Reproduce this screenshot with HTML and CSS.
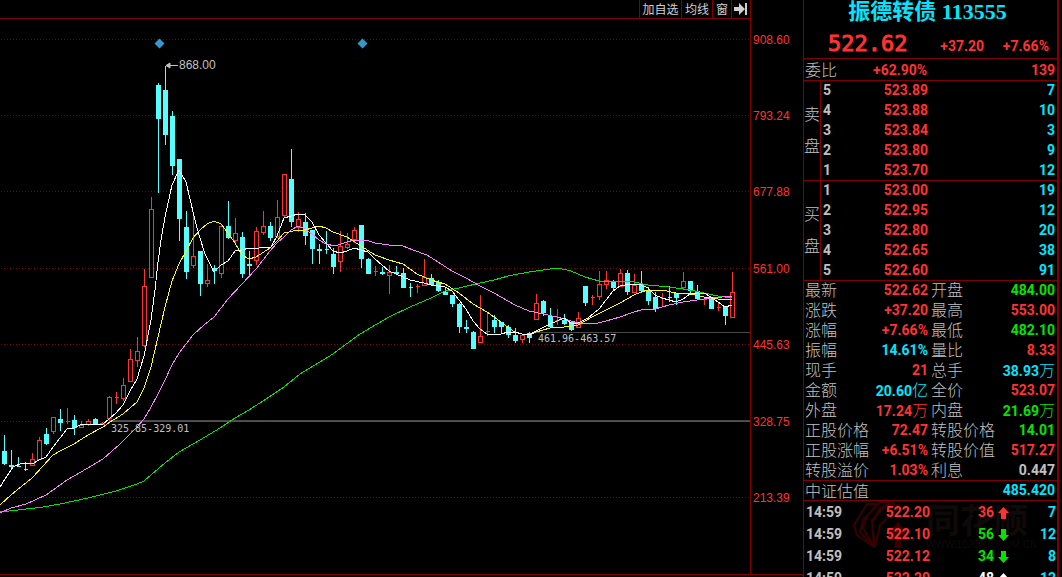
FILE: index.html
```html
<!DOCTYPE html>
<html lang="zh-CN">
<head>
<meta charset="utf-8">
<title>振德转债 113555</title>
<link rel="stylesheet" href="styles.css">
</head>
<body>
<main class="chart">
  <nav class="toolbar">
    <button type="button" class="tool tool-add">加自选</button>
    <button type="button" class="tool tool-ma">均线</button>
    <button type="button" class="tool tool-win">窗</button>
    <button type="button" class="tool tool-win" aria-label="收起">
      <svg width="14" height="12" viewBox="0 0 14 12"><path d="M0 4h5V0l6 6-6 6V8H0zM11 0h2v12h-2z" fill="#d0d0d0"/></svg>
    </button>
  </nav>
  <svg class="plot" viewBox="0 19 803 556" role="img" aria-label="K线图">
    <path class="grid" d="M1 39.5H750M1 115.5H750M1 191.5H750M1 268.5H750M1 344.5H750M1 421.5H750M1 497.5H750"/>
    <path class="gap" d="M109 420.5H750M533 332.5H750"/>
    <path class="gap-strong" d="M109 421.5H750"/>
    <path class="frame" d="M750.5 19V575M0 574.5H803"/>
    <g id="candles"></g>
    <polyline class="ma ma60" points="0,512 18,510 43,507 60,504 88,498 116,491 137,484 144,481 151,475 165,463 179,452 200,440 220,428 235,418 249,410 263,401 284,387 300,374 330,356 360,334 389,317 410,307 431,298 445,291 459,288 480,283 494,280 508,276 529,272 543,270 558,268 571,271 585,277 599,281 620,281 634,282 648,285 669,287 690,290 704,293 718,296 732,298"/>
    <polyline class="ma ma20" points="0,513 11,508 26,504 46,495 67,480 81,472 103,459 120,444 137,427 144,419 151,407 158,394 165,380 172,365 179,353 186,344 193,335 204,325 214,317 228,299 242,284 256,269 270,251 277,243 284,237 291,230 298,226 305,229 312,234 319,240 326,244 335,246 347,242 354,240 366,240 375,243 389,245 403,246 413,250 427,255 438,262 452,271 466,278 480,286 494,293 508,301 515,305 529,311 543,314 557,317 571,321 578,323 598,323 606,321 620,317 634,312 641,310 655,309 669,305 683,302 697,300 711,298 722,297 732,296"/>
    <polyline class="ma ma10" points="0,505 11,495 22,486 32,478 43,466 53,455 60,451 74,444 88,435 103,427 110,422 123,414 137,402 144,388 151,367 158,337 165,307 172,281 179,264 186,251 193,238 200,230 207,224 214,221 221,224 228,233 235,243 242,255 249,259 256,257 270,248 277,241 284,233 298,230 305,230 312,228 319,226 326,228 333,232 347,237 361,246 375,255 389,260 403,264 417,274 431,280 445,284 459,293 473,304 487,312 501,322 510,329 515,332 522,334 529,335 536,332 550,328 564,327 578,325 592,317 606,310 620,303 634,295 641,292 648,290 662,290 676,293 690,294 704,297 711,298 725,300 732,299"/>
    <polyline class="ma ma5" points="0,487 5,479 13,467 22,463 32,464 39,460 46,457 53,447 60,438 67,429 74,428 82,424 103,424 109,419 116,413 123,405 130,391 137,379 144,356 151,320 155,290 158,262 161,240 165,217 172,185 179,170 186,182 195,220 199,235 205,254 212,268 214,272 221,265 228,261 235,251 242,250 249,248 255,249 263,247 271,247 277,236 284,218 291,216 298,214 305,215 312,222 319,235 326,243 333,251 340,253 347,251 354,248 361,250 368,252 375,259 382,265 389,271 396,274 410,280 424,283 431,285 438,286 445,287 452,291 459,300 466,309 473,321 480,329 487,334 501,334 508,332 515,332 522,334 529,335 536,331 550,324 557,321 564,318 571,323 578,323 588,318 599,309 606,300 613,291 620,286 630,284 641,285 648,288 655,295 662,298 669,300 676,302 683,299 690,294 704,293 711,297 718,302 725,307 732,305"/>
    <path class="event" d="M159.500 38.500l5 5-5 5-5-5zM362.500 38.500l5 5-5 5-5-5z"/>
    <path class="pointer" d="M166 65.500H178M170 63l-4 2.500 4 2.500z"/>
    <text class="peak" x="179" y="69">868.00</text>
    <text class="range" x="111" y="432">325.85-329.01</text>
    <text class="range" x="538" y="342">461.96-463.57</text>
    <g class="axis">
      <text x="753" y="44">908.60</text>
      <text x="753" y="120">793.24</text>
      <text x="753" y="196">677.88</text>
      <text x="753" y="273">561.00</text>
      <text x="753" y="349">445.63</text>
      <text x="753" y="426">328.75</text>
      <text x="753" y="502">213.39</text>
    </g>
  </svg>
</main>

<aside class="panel">
  <header class="head">
    <h1 class="name">振德转债 113555</h1>
    <div class="quote"><span class="last">522.62</span><span>+37.20</span><span>+7.66%</span></div>
  </header>
  <div class="line ratio"><span class="label">委比</span><span class="ratio-pct red">+62.90%</span><span class="red">139</span></div>

  <table class="book">
    <tbody>
      <tr><th class="side" rowspan="5"><span>卖</span><span>盘</span></th><td class="lvl">5</td><td class="px">523.89</td><td class="vol">7</td></tr>
      <tr><td class="lvl">4</td><td class="px">523.88</td><td class="vol">10</td></tr>
      <tr><td class="lvl">3</td><td class="px">523.84</td><td class="vol">3</td></tr>
      <tr><td class="lvl">2</td><td class="px">523.80</td><td class="vol">9</td></tr>
      <tr class="end"><td class="lvl">1</td><td class="px">523.70</td><td class="vol">12</td></tr>
    </tbody>
    <tbody>
      <tr><th class="side" rowspan="5"><span>买</span><span>盘</span></th><td class="lvl">1</td><td class="px">523.00</td><td class="vol">19</td></tr>
      <tr><td class="lvl">2</td><td class="px">522.95</td><td class="vol">12</td></tr>
      <tr><td class="lvl">3</td><td class="px">522.80</td><td class="vol">20</td></tr>
      <tr><td class="lvl">4</td><td class="px">522.65</td><td class="vol">38</td></tr>
      <tr class="end"><td class="lvl">5</td><td class="px">522.60</td><td class="vol">91</td></tr>
    </tbody>
  </table>

  <table class="stats">
    <colgroup><col class="c1"><col class="c2"><col class="c3"><col></colgroup>
    <tbody>
      <tr><th>最新</th><td class="red">522.62</td><th>开盘</th><td class="green">484.00</td></tr>
      <tr><th>涨跌</th><td class="red">+37.20</td><th>最高</th><td class="red">553.00</td></tr>
      <tr><th>涨幅</th><td class="red">+7.66%</td><th>最低</th><td class="green">482.10</td></tr>
      <tr><th>振幅</th><td class="cyan">14.61%</td><th>量比</th><td class="red">8.33</td></tr>
      <tr><th>现手</th><td class="red">21</td><th>总手</th><td class="cyan">38.93<i>万</i></td></tr>
      <tr><th>金额</th><td class="cyan">20.60<i>亿</i></td><th>全价</th><td class="red">523.07</td></tr>
      <tr><th>外盘</th><td class="red">17.24<i>万</i></td><th>内盘</th><td class="green">21.69<i>万</i></td></tr>
      <tr><th>正股价格</th><td class="red">72.47</td><th>转股价格</th><td class="green">14.01</td></tr>
      <tr><th>正股涨幅</th><td class="red">+6.51%</td><th>转股价值</th><td class="red">517.27</td></tr>
      <tr class="end"><th>转股溢价</th><td class="red">1.03%</td><th>利息</th><td class="grey">0.447</td></tr>
    </tbody>
  </table>
  <div class="line valuation"><span class="label">中证估值</span><span class="cyan">485.420</span></div>

  <section class="ticks">
    <svg class="mark" width="184" height="56" viewBox="0 0 184 56" aria-hidden="true">
      <g fill="none" stroke="#380000" stroke-width="2">
        <path d="M15 3h11L11 19 8 31l14 15L5 34 2 24zM28 1h9L20 19l2 27-11-19 4-12zM40 2l7 3-19 19-5 22-3-24 8-15z"/>
      </g>
      <path d="M46 20c3 7 10 9 10 15 0 5-6 6-8 3l2 9h-8l2-9c-2 3-8 2-8-3 0-6 7-8 10-15z" fill="#380000"/>
      <text class="mark-name" x="74" y="32">同花顺</text>
      <text class="mark-url" x="74" y="47">WWW.10JQKA.COM.CN</text>
    </svg>
    <table class="trades">
      <colgroup><col class="t1"><col class="t2"><col class="t3"><col class="t4"><col></colgroup>
      <tbody>
        <tr><td class="time">14:59</td><td class="red">522.20</td><td class="red">36</td><td class="dir red"><svg width="11" height="12" viewBox="0 0 11 12"><path d="M5.500 0L11 6H8v6H3V6H0z"/></svg></td><td class="cyan">7</td></tr>
        <tr><td class="time">14:59</td><td class="red">522.10</td><td class="green">56</td><td class="dir green"><svg width="11" height="12" viewBox="0 0 11 12"><path d="M5.500 12L0 6h3V0h5v6h3z"/></svg></td><td class="cyan">12</td></tr>
        <tr><td class="time">14:59</td><td class="red">522.12</td><td class="green">34</td><td class="dir green"><svg width="11" height="12" viewBox="0 0 11 12"><path d="M5.500 12L0 6h3V0h5v6h3z"/></svg></td><td class="cyan">8</td></tr>
        <tr><td class="time">14:59</td><td class="red">522.20</td><td class="white">48</td><td class="dir white"><svg width="11" height="12" viewBox="0 0 11 12"><path d="M5.500 0L11 6H8v6H3V6H0z"/></svg></td><td class="cyan">12</td></tr>
      </tbody>
    </table>
  </section>
</aside>
<script src="chart.js"></script>
</body>
</html>
```

FILE: styles.css
```css
* { box-sizing: border-box; }

body {
  margin: 0;
  display: flex;
  height: 100vh;
  overflow: hidden;
  background: #000;
  color: #c0c0c0;
  font: 700 14px/20px Roboto, "Liberation Sans", "Noto Sans CJK SC", sans-serif;
}

/* chart */
.chart { flex: 1; min-width: 0; }

.toolbar {
  display: flex;
  justify-content: flex-end;
  height: 19px;
  margin-right: 52px;
  border-right: 1px solid #800000;
  border-bottom: 1px solid #800000;
}

.tool {
  display: flex;
  align-items: center;
  justify-content: center;
  padding: 0;
  border: 0;
  border-left: 1px solid #800000;
  background: none;
  color: #d0d0d0;
  font: 400 12px/18px "Noto Sans CJK SC", sans-serif;
}
.tool-add { width: 42px; }
.tool-ma { width: 31px; }
.tool-win { width: 19px; }

.plot { display: block; width: 100%; height: auto; }
.grid, .gap, .gap-strong, .frame, .ma, .up, .down { shape-rendering: crispEdges; }
.grid { stroke: #800000; stroke-dasharray: 1 2; }
.gap { stroke: #484848; }
.gap-strong { stroke: #585050; }
.frame { stroke: #800000; fill: none; }
.up { stroke: #ff3232; fill: #000; }
.down { stroke: #54ffff; fill: #54ffff; }
.ma { fill: none; stroke-width: 1; }
.ma5 { stroke: #fff; }
.ma10 { stroke: #ff0; }
.ma20 { stroke: #ff80ff; }
.ma60 { stroke: #00e600; }
.event { fill: #3399cc; }
.pointer { stroke: #c0c0c0; fill: #c0c0c0; }
.peak { fill: #c0c0c0; font: 400 12px "Liberation Sans", sans-serif; }
.range { fill: #c0c0c0; font: 400 10px "DejaVu Sans Mono", monospace; }
.axis { fill: #ff3232; font: 400 12px "Liberation Sans", sans-serif; }

/* quote panel */
.panel {
  flex: 0 0 256px;
  margin-right: 3px;
  border: solid #800000;
  border-width: 0 2px 0 1px;
}

.red { color: #ff3232; }
.green { color: #00e600; }
.cyan { color: #00e6ff; }
.white { color: #fff; }
.grey { color: #c0c0c0; }

.head { height: 59px; border-bottom: 1px solid #800000; }
.name {
  margin: 0;
  padding-right: 6px;
  color: #00e6ff;
  text-align: center;
  font: 700 22px/24px "Liberation Serif", "Noto Sans CJK SC", serif;
}
.quote {
  display: flex;
  align-items: baseline;
  justify-content: space-between;
  padding: 7px 8px 0 24px;
  color: #ff3232;
}
.last {
  margin-right: 14px;
  font: 400 22px/26px "DejaVu Sans Mono", monospace;
  -webkit-text-stroke: 1px #ff3232;
}

.line {
  display: flex;
  justify-content: space-between;
  padding: 0 2px 0 1px;
  border-bottom: 1px solid #800000;
}
.ratio { height: 22px; line-height: 22px; }
.ratio-pct { flex: 1; padding-left: 36px; }
.valuation { height: 20px; line-height: 19px; }
.label { font: 300 16px/20px "Noto Sans CJK SC", sans-serif; }
.valuation .label { line-height: 18px; }

table { width: 100%; border-spacing: 0; table-layout: fixed; }
td, th { height: 20px; padding: 0; line-height: 18px; text-align: right; vertical-align: top; }
.end td, .end th, .side { border-bottom: 1px solid #800000; }

.side {
  width: 17px;
  padding-top: 16px;
  border-right: 1px solid #800000;
  font: 300 16px/32px "Noto Sans CJK SC", sans-serif;
  text-align: center;
}
.side span { display: block; }
.lvl { width: 20px; padding-left: 2px; text-align: left; }
.px { width: 87px; color: #ff3232; }
.vol { padding-right: 2px; color: #00e6ff; }

.stats th {
  padding-left: 1px;
  font: 300 16px/17px "Noto Sans CJK SC", sans-serif;
  text-align: left;
  white-space: nowrap;
}
.stats th + td + th { padding-left: 3px; }
.stats td:last-child { padding-right: 2px; }
.stats i { font: 300 16px/16px "Noto Sans CJK SC", sans-serif; }
.c1 { width: 66px; }
.c2 { width: 58px; }
.c3 { width: 67px; }

.ticks { position: relative; }
.mark { position: absolute; top: 0; left: 48px; }
.mark-name { fill: #100909; font: 700 34px "Noto Sans CJK SC", sans-serif; }
.mark-url { fill: #100909; font: 400 10px "Liberation Sans", sans-serif; }
.trades { position: relative; }
.trades td { height: 22px; padding-right: 1px; line-height: 22px; }
.trades .time { padding-left: 2px; text-align: left; }
.trades .dir { padding: 0 1px 0 0; text-align: center; }
.dir svg { vertical-align: -2px; fill: currentColor; }
.t1 { width: 60px; }
.t2 { width: 67px; }
.t3 { width: 64px; }
.t4 { width: 18px; }
```

FILE: chart.js
```js
// Each candle: [direction, high, body top, body bottom, low], spaced 7 units apart.
const candles = [
  ["d",435,451,464,465],["d",450,465,467,468],["d",457,466,467,467],["d",462,469,470,471],
  ["u",453,459,465,466],["u",437,440,459,460],["d",428,434,444,445],["u",417,417,431,434],
  ["d",409,419,423,431],["u",408,421,421,424],["d",415,420,428,435],["u",421,425,427,428],
  ["u",419,421,424,426],["d",418,419,424,424],["u",422,423,424,425],["u",396,397,418,422],
  ["u",392,397,397,404],["u",378,385,398,401],["u",349,359,381,382],["u",337,351,360,367],
  ["u",269,286,345,347],["u",197,209,277,277],["d",83,85,119,193],["d",66,90,135,145],
  ["d",111,116,166,175],["d",159,159,219,241],["d",211,227,272,279],["u",216,256,265,268],
  ["d",251,251,284,296],["u",264,280,283,287],["d",265,268,271,284],["u",224,226,273,278],
  ["d",201,226,238,239],["u",218,233,240,244],["d",232,237,274,278],["d",251,264,266,276],
  ["u",227,231,260,265],["u",211,226,232,235],["d",222,226,238,241],["u",200,217,236,238],
  ["u",174,174,215,217],["d",149,179,222,227],["u",212,219,227,232],["d",213,222,236,245],
  ["d",230,230,249,264],["d",244,249,251,264],["d",231,249,250,254],["d",248,254,267,274],
  ["u",231,246,261,272],["u",233,244,247,249],["u",227,230,239,243],["d",225,225,259,268],
  ["d",258,259,274,274],["u",266,271,271,276],["d",267,272,274,275],["u",265,272,275,294],
  ["d",266,272,274,275],["d",268,273,288,288],["d",283,287,288,297],["u",284,286,286,293],
  ["u",259,277,285,286],["d",274,278,285,285],["d",280,282,291,292],["d",287,292,295,295],
  ["d",295,295,304,307],["d",303,304,327,333],["d",320,327,329,333],["d",331,332,349,349],
  ["u",295,336,342,343],["u",313,331,331,336],["d",315,320,327,333],["d",322,322,327,333],
  ["d",325,327,335,338],["d",328,335,341,343],["u",334,335,339,343],["d",332,333,338,343],
  ["u",294,303,319,320],["d",300,301,313,316],["d",308,316,327,328],["u",309,320,320,325],
  ["d",314,320,324,325],["d",321,322,330,331],["u",312,318,327,328],["d",286,286,303,306],
  ["u",295,297,297,305],["u",271,284,296,300],["u",271,280,284,289],["d",280,282,288,290],
  ["u",269,273,286,287],["d",270,273,292,295],["u",274,285,292,293],["d",271,284,291,293],
  ["d",287,291,301,305],["d",292,297,309,312],["u",293,298,298,307],["d",286,297,298,302],
  ["d",293,293,298,305],["u",272,281,287,290],["d",281,281,291,293],["d",285,291,299,300],
  ["u",297,299,299,305],["d",298,298,309,309],["u",303,307,307,311],["d",306,307,316,325],
  ["u",272,292,317,318]
];

document.getElementById("candles").innerHTML = candles.map(([dir, high, top, bottom, low], i) => {
  const x = 4 + i * 7;
  const wick = `M${x + 0.5} ${high}V${low}`;
  if (dir === "d") {
    return `<path class="down" d="${wick}M${x - 1.5} ${top + 0.5}h4V${Math.max(bottom - 0.5, top + 0.5)}h-4z"/>`;
  }
  const body = `M${x - 1.5} ${top + 0.5}h4V${bottom + 0.5}h-4z`;
  return `<path class="up" d="${wick}"/><path class="up" d="${body}"/>`;
}).join("");
```
